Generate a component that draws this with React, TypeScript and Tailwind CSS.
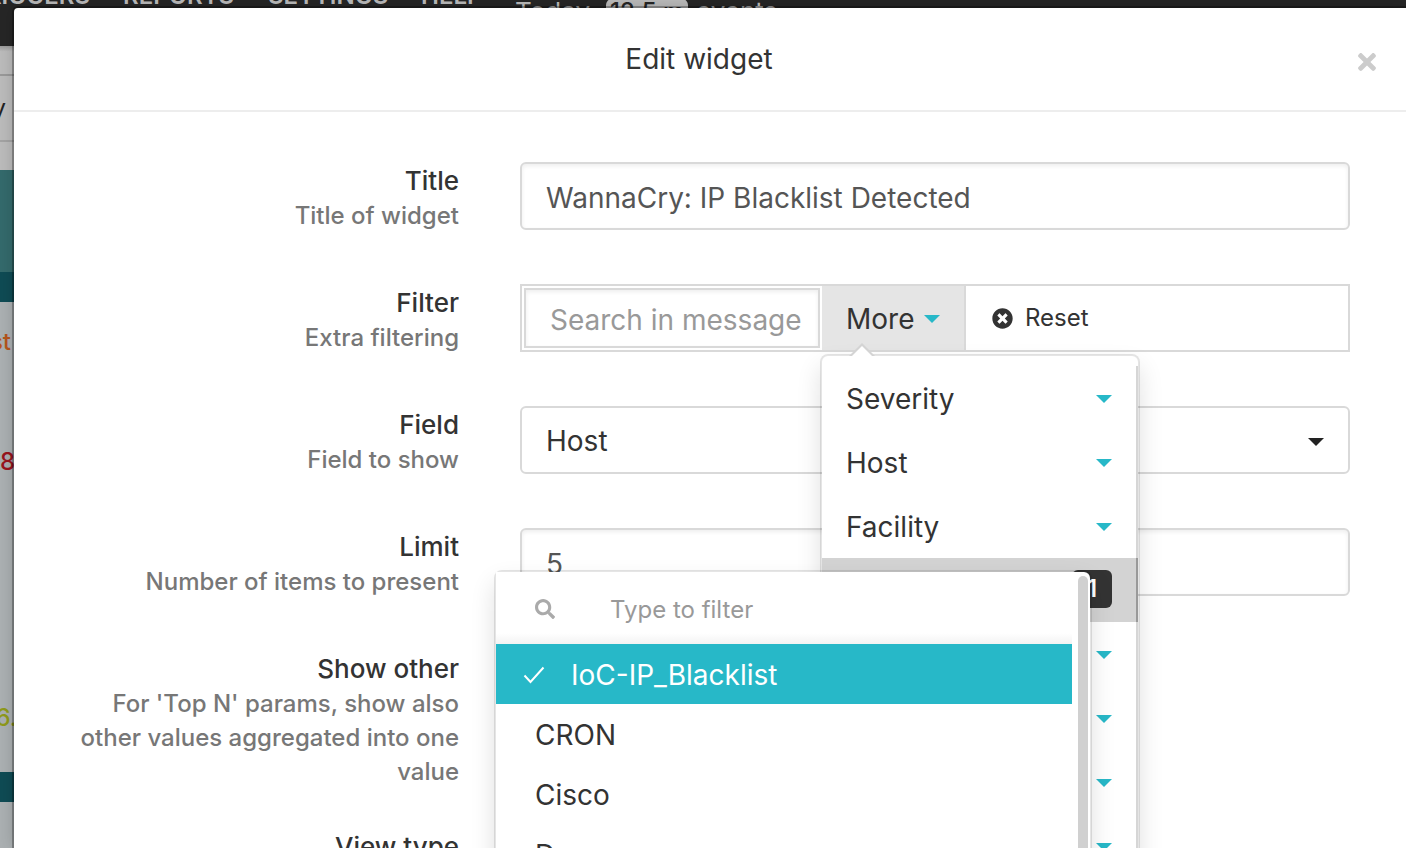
import React from "react";
import { FaSearch, FaTimes, FaTimesCircle } from "react-icons/fa";

const FONT = "font-['Inter','Liberation_Sans',sans-serif]";

function Caret({ className }: { className: string }) {
  return (
    <svg viewBox="0 0 16 8" className={`h-2 w-4 shrink-0 ${className}`} aria-hidden="true">
      <path d="M0 0H16L8 8Z" fill="currentColor" />
    </svg>
  );
}

function Row({
  label,
  hint,
  htmlFor,
  children,
}: {
  label: string;
  hint?: string;
  htmlFor: string;
  children?: React.ReactNode;
}) {
  return (
    <div className="flex min-h-[122px] gap-[61px] pb-[39px]">
      <label htmlFor={htmlFor} className="flex w-[389px] shrink-0 flex-col pt-px text-right font-medium">
        <span className="text-[26px] leading-9 text-[#333]">{label}</span>
        <span className="text-2xl leading-[34px] text-[#777]">{hint}</span>
      </label>
      <div className="min-w-0 flex-1">{children}</div>
    </div>
  );
}

const inputClass =
  "block h-[68px] w-full rounded-md border-2 border-[#d9d9d9] bg-white px-6 pt-1 text-[28px] text-[#555] shadow-[inset_0_2px_4px_rgba(0,0,0,0.07)] outline-none";

function SubMenu() {
  return (
    <div className="absolute top-3 right-11 z-20 w-[598px] rounded-lg border-2 border-black/10 bg-white bg-clip-padding shadow-[0_12px_24px_rgba(0,0,0,0.12)]">
      <div className="flex">
        <div className="min-w-0 flex-1">
          <div className="flex h-[72px] items-center bg-linear-to-b from-white from-85% to-[#f3f3f3] pt-0.5 pl-[39px]">
            <FaSearch className="size-5 shrink-0 text-[#aaa]" />
            <input
              aria-label="Type to filter"
              placeholder="Type to filter"
              className="ml-[55px] min-w-0 flex-1 bg-transparent pt-0.5 text-2xl text-[#333] outline-none placeholder:text-[#999]"
            />
          </div>
          <ul>
            <li>
              <button
                type="button"
                className="flex h-[60px] w-full items-center bg-[#27b8c8] pt-0.5 pl-[27px] text-left text-[28px] text-white"
              >
                <svg viewBox="0 0 22 18" className="mr-[26px] h-[18px] w-[22px]" fill="none" aria-hidden="true">
                  <path d="M1.5 9.5L7.5 16L20.5 1.5" stroke="currentColor" strokeWidth="2" />
                </svg>
                IoC-IP_Blacklist
              </button>
            </li>
            {["CRON", "Cisco", "D"].map((name) => (
              <li key={name}>
                <button
                  type="button"
                  className="flex h-[60px] w-full items-center pt-0.5 pl-[39px] text-left text-[28px] text-[#333]"
                >
                  {name}
                </button>
              </li>
            ))}
          </ul>
        </div>
        <div className="flex w-[18px] justify-end pt-1 pr-0.5">
          <div className="w-2.5 rounded-t-md bg-[#d0d0d0]" />
        </div>
      </div>
    </div>
  );
}

function MoreMenu() {
  return (
    <div className="absolute top-[68px] -left-0.5 z-10 w-80 rounded-lg border-2 border-black/10 bg-white bg-clip-padding pt-2.5 text-[#333] shadow-[0_12px_24px_rgba(0,0,0,0.12)]">
      <svg viewBox="0 0 26 13" className="absolute -top-[13px] left-[27px] h-[13px] w-[26px]" aria-hidden="true">
        <path d="M0 13L13 0L26 13Z" fill="#d4d4d4" />
        <path d="M3 13L13 3L23 13Z" fill="#fff" />
      </svg>
      <ul>
        {["Severity", "Host", "Facility"].map((name) => (
          <li key={name} className="border-r-2 border-[#d6d6d6]">
            <button type="button" className="flex h-16 w-full items-center justify-between px-6 pt-0.5 text-[28px]">
              {name}
              <Caret className="text-[#27b8c8]" />
            </button>
          </li>
        ))}
        <li className="relative flex h-16 items-center justify-end border-r-2 border-[#999] bg-[#d3d3d3] pr-6 pb-0.5">
          <span className="flex h-[38px] w-10 items-center justify-center rounded-md bg-[#333] text-2xl font-semibold text-white">
            1
          </span>
          <SubMenu />
        </li>
        {[0, 1, 2, 3].map((n) => (
          <li key={n} className="border-r-2 border-[#d6d6d6]">
            <button
              type="button"
              aria-label="Expand"
              className="flex h-16 w-full items-center justify-end pt-0.5 pr-6"
            >
              <Caret className="text-[#27b8c8]" />
            </button>
          </li>
        ))}
      </ul>
    </div>
  );
}

function Backdrop() {
  return (
    <div className="flex min-h-screen flex-col bg-[#abb0b2]">
      <header className="h-[46px] overflow-hidden bg-[#262626] text-[#bbb]">
        <nav className="-mt-5 flex h-8 items-start text-2xl leading-8 font-semibold">
          <a href="#" className="flex w-[90px] shrink-0 justify-end">TRIGGERS</a>
          <a href="#" className="ml-[33px] w-28">REPORTS</a>
          <a href="#" className="ml-[33px] w-[121px]">SETTINGS</a>
          <a href="#" className="ml-8 w-[57px]">HELP</a>
          <div className="mt-4 ml-[37px] flex items-center text-[26px] leading-8 font-normal">
            Today
            <span className="mr-2 ml-4 flex h-[26px] w-[82px] items-center justify-center rounded-md bg-[#bbb] text-2xl font-medium text-[#262626]">
              12.5 m
            </span>
            events
          </div>
        </nav>
      </header>
      <div className="flex h-[124px] flex-col bg-[#bbb]">
        <div className="h-[30px] border-b-2 border-[#999] bg-linear-to-b from-[#999] to-[#bbb] to-20%" />
        <div className="flex h-[66px] items-center border-b-2 border-[#a3a3a3] text-2xl text-[#222]">
          <span className="flex w-1.5 justify-end">y</span>
        </div>
      </div>
      <div className="h-[102px] bg-[#346a6c]" />
      <div className="h-[30px] bg-[#0f4b54]" />
      <div className="flex h-[470px] flex-col text-2xl font-medium">
        <span className="mt-6 flex w-[11px] justify-end leading-8 text-[#b5561c]">st</span>
        <span className="mt-[88px] flex w-[15px] justify-end leading-8 text-[#99141e]">88</span>
        <span className="mt-56 flex w-[17px] justify-end leading-8 text-[#8f9a1c]">6.</span>
      </div>
      <div className="h-[30px] bg-[#0f4b54]" />
    </div>
  );
}

export default function App() {
  return (
    <div className={`relative h-screen overflow-hidden ${FONT}`}>
      <Backdrop />
      <section
        role="dialog"
        aria-labelledby="dialog-title"
        className="absolute top-2 right-0 bottom-0 left-3.5 rounded-tl-sm bg-white shadow-[0_0_0_2px_rgba(0,0,0,0.28),0_0_16px_rgba(0,0,0,0.2)]"
      >
        <header className="flex h-[104px] items-center border-b-2 border-[#ededed] pr-[26px] pl-[30px]">
          <h1 id="dialog-title" className="flex-1 text-center text-[28px] text-[#333]">
            Edit widget
          </h1>
          <button type="button" aria-label="Close" className="mt-1.5 text-[#ccc]">
            <FaTimes className="size-[26px]" />
          </button>
        </header>
        <form className="pt-[50px] pr-14 pl-14">
          <Row label="Title" hint="Title of widget" htmlFor="title">
            <input id="title" className={inputClass} defaultValue="WannaCry: IP Blacklist Detected" />
          </Row>
          <Row label="Filter" hint="Extra filtering" htmlFor="filter">
            <div className="flex h-[68px] border-2 border-[#d9d9d9]">
              <div className="w-[300px] p-0.5">
                <input
                  id="filter"
                  placeholder="Search in message"
                  className="h-full w-full border-2 border-[#d9d9d9] bg-white pt-1 pr-2 pl-6 text-[28px] shadow-[inset_0_2px_4px_rgba(0,0,0,0.07)] outline-none placeholder:text-[#999]"
                />
              </div>
              <div className="relative">
                <button
                  type="button"
                  className="flex h-full w-36 items-center justify-between border-r-2 border-[#d9d9d9] bg-[#e5e5e5] px-6 pt-0.5 text-[28px] text-[#333]"
                >
                  More
                  <Caret className="text-[#27b8c8]" />
                </button>
                <MoreMenu />
              </div>
              <button type="button" className="flex items-center gap-3 pl-[26px] text-2xl text-[#333]">
                <FaTimesCircle className="size-[21px]" />
                Reset
              </button>
            </div>
          </Row>
          <Row label="Field" hint="Field to show" htmlFor="field">
            <div className="relative">
              <select
                id="field"
                className="h-[68px] w-full appearance-none rounded-md border-2 border-[#d9d9d9] bg-white px-6 pt-0.5 text-[28px] text-[#333] outline-none"
              >
                <option>Host</option>
              </select>
              <Caret className="pointer-events-none absolute top-8 right-[26px] text-[#222]" />
            </div>
          </Row>
          <Row label="Limit" hint="Number of items to present" htmlFor="limit">
            <input id="limit" className={inputClass} defaultValue="5" />
          </Row>
          <Row
            label="Show other"
            hint="For 'Top N' params, show also other values aggregated into one value"
            htmlFor="other"
          />
          <Row label="View type" htmlFor="view" />
        </form>
      </section>
    </div>
  );
}
